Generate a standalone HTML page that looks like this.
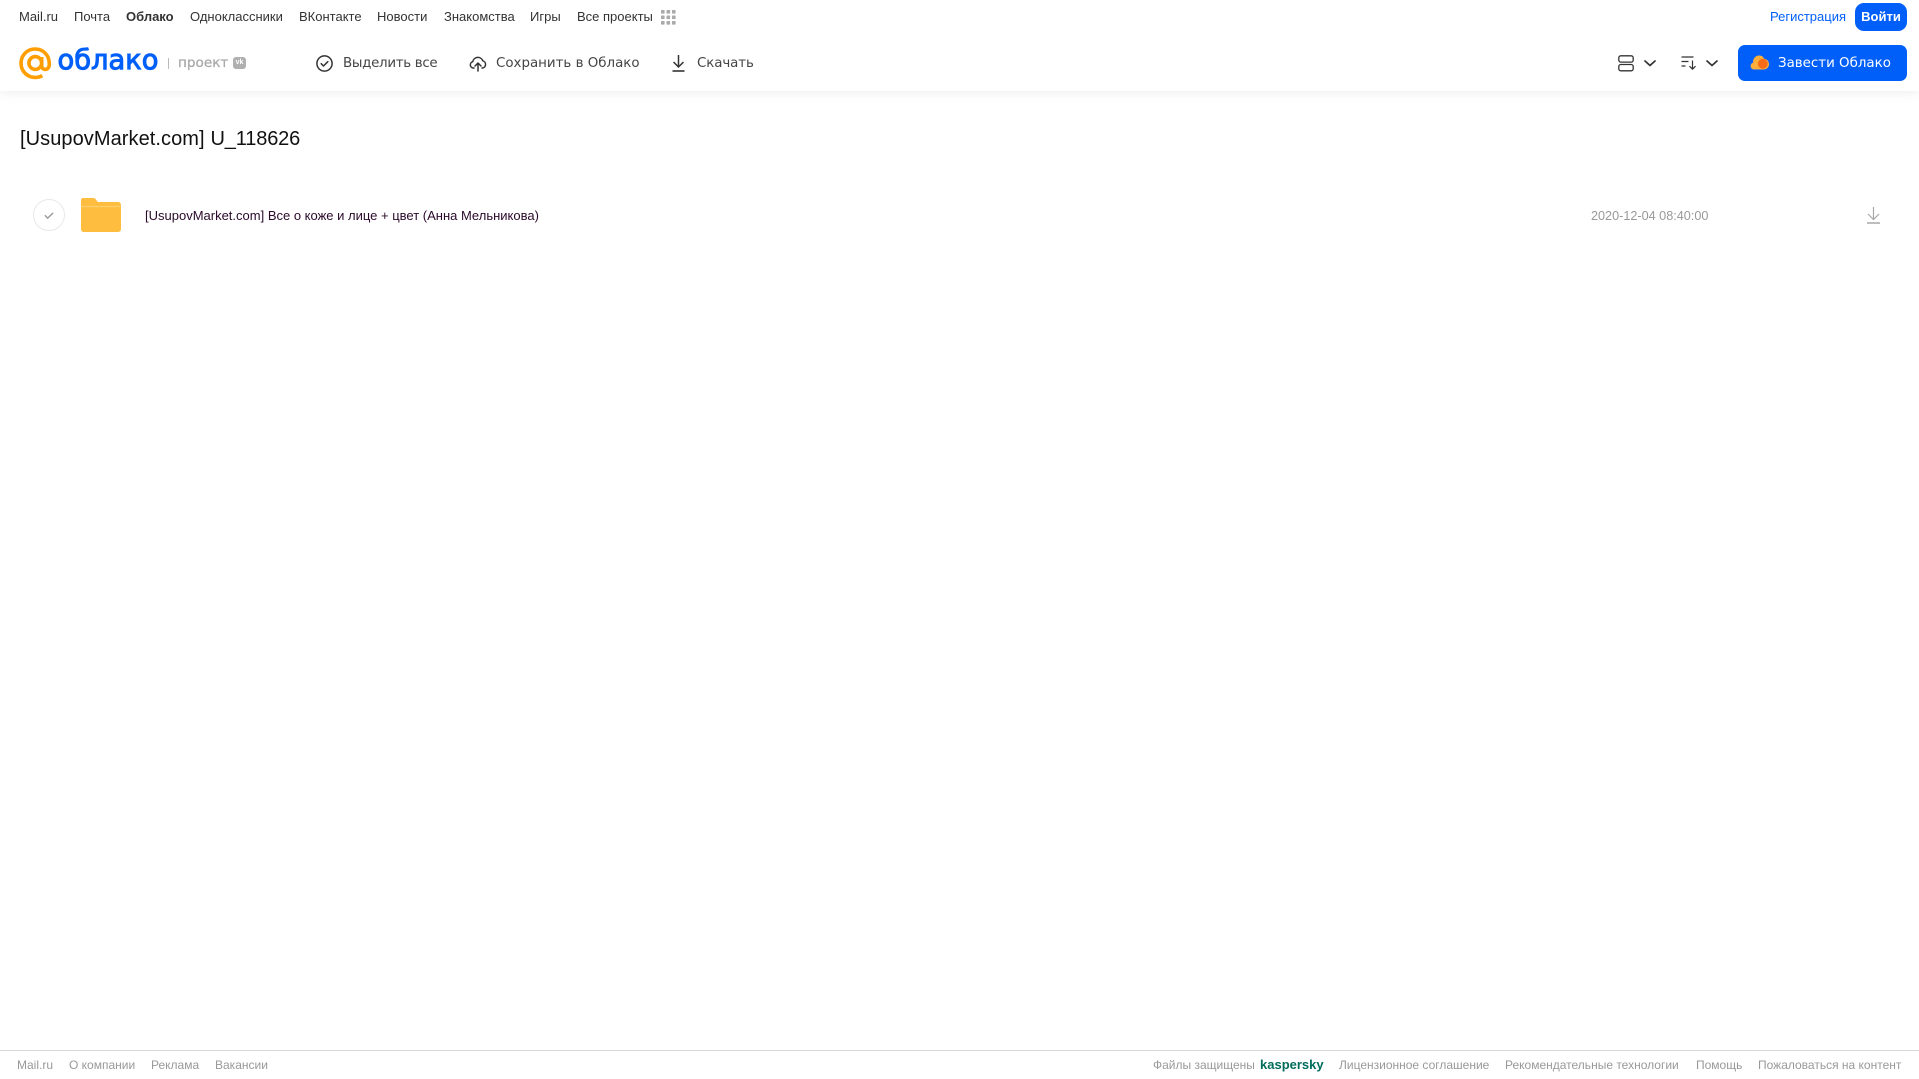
<!DOCTYPE html>
<html lang="ru"><head><meta charset="utf-8"><title>Облако</title>
<style>
html,body{margin:0;padding:0;background:#fff;width:1919px;height:1079px;overflow:hidden;font-family:"Liberation Sans",sans-serif}
.t{position:absolute;white-space:nowrap;line-height:20px}
.n{top:7px;font-size:13px;color:#333}
.b{top:53.500px;color:#444;font-family:"DejaVu Sans","Liberation Sans",sans-serif;font-size:13.400px}
.f{top:1055px;font-size:12px;color:#999}
svg{position:absolute;overflow:visible}
#hd{position:absolute;left:0;top:0;width:1919px;height:91px;background:#fff;box-shadow:0 0 12px rgba(0,0,0,.09)}
</style></head><body>
<div id="hd"></div>
<span class="t n" style="left:19px">Mail.ru</span>
<span class="t n" style="left:74px">Почта</span>
<span class="t n" style="left:126px;font-weight:bold">Облако</span>
<span class="t n" style="left:190px">Одноклассники</span>
<span class="t n" style="left:299px">ВКонтакте</span>
<span class="t n" style="left:377px">Новости</span>
<span class="t n" style="left:444px">Знакомства</span>
<span class="t n" style="left:530px">Игры</span>
<span class="t n" style="left:577px">Все проекты</span>
<svg style="left:661px;top:10px" width="15" height="15" fill="#aaa"><rect x="0" y="0" width="3.600" height="3.600" rx=".6"/><rect x="5.500" y="0" width="3.600" height="3.600" rx=".6"/><rect x="11" y="0" width="3.600" height="3.600" rx=".6"/><rect x="0" y="5.500" width="3.600" height="3.600" rx=".6"/><rect x="5.500" y="5.500" width="3.600" height="3.600" rx=".6"/><rect x="11" y="5.500" width="3.600" height="3.600" rx=".6"/><rect x="0" y="11" width="3.600" height="3.600" rx=".6"/><rect x="5.500" y="11" width="3.600" height="3.600" rx=".6"/><rect x="11" y="11" width="3.600" height="3.600" rx=".6"/></svg>
<span class="t" style="left:1770px;top:7px;font-size:13px;color:#005ff9">Регистрация</span>
<div style="position:absolute;left:1855px;top:3px;width:52px;height:28px;background:#005ff9;border-radius:9px"></div>
<span class="t" style="left:1855px;width:52px;text-align:center;top:7px;font-size:13px;color:#fff;font-weight:bold">Войти</span>

<svg style="left:19px;top:47px" width="33" height="33" viewBox="0 0 33 33" fill="none" stroke="#ff9e00" stroke-width="3.600"><circle cx="16.300" cy="16" r="6.400"/><path d="M22.700 10v8.500c0 5.500 7.600 5.500 7.600-1.500C30.300 8 24 2 16 2 8.300 2 2 8.300 2 16.300 2 24.500 8.500 30.500 16.300 30.500c2.700 0 5-.7 7-1.900"/></svg>
<span class="t" style="left:57.500px;top:43px;line-height:36px;font-size:27.300px;color:#005ff9;font-family:'DejaVu Sans','Liberation Sans',sans-serif;-webkit-text-stroke:1px #005ff9">облако</span>
<div style="position:absolute;left:168px;top:58px;width:1px;height:11px;background:#bbb"></div>
<span class="t" style="left:178px;top:53px;font-size:13.600px;color:#aaa;font-family:'DejaVu Sans','Liberation Sans',sans-serif;-webkit-text-stroke:.3px #aaa">проект</span>
<div style="position:absolute;left:233px;top:57px;width:13px;height:12px;background:#b0b0b0;border-radius:3px"></div>
<span class="t" style="left:233px;top:57px;width:13px;height:12px;text-align:center;line-height:12px;font-size:7px;font-weight:bold;color:#fff">vk</span>

<svg style="left:316px;top:55px" width="17" height="17" viewBox="0 0 17 17" fill="none" stroke="#333" stroke-width="1.500"><circle cx="8.500" cy="8.500" r="7.600"/><path d="M5.200 8.700l2.300 2.300 4.300-4.300" stroke-linecap="round" stroke-linejoin="round"/></svg>
<span class="t b" style="left:343px;letter-spacing:-.3px">Выделить все</span>
<svg style="left:469px;top:54px" width="18" height="18" viewBox="0 0 18 18" fill="none" stroke="#333" stroke-width="1.500" stroke-linecap="round" stroke-linejoin="round"><path d="M5 14H4.200A3.200 3.200 0 0 1 3.800 7.700 5.200 5.200 0 0 1 13.800 6.800 3.700 3.700 0 0 1 13.600 14H13"/><path d="M9 17V9.500M6 12l3-3 3 3"/></svg>
<span class="t b" style="left:496px">Сохранить в Облако</span>
<svg style="left:671px;top:55px" width="15" height="17" viewBox="0 0 15 17" fill="none" stroke="#333" stroke-width="1.500"><path d="M7.500 0v11.500M2.500 7l5 5 5-5"/><path d="M1.500 16h12" stroke-width="1.600"/></svg>
<span class="t b" style="left:697px;letter-spacing:-.1px">Скачать</span>

<svg style="left:1618px;top:55px" width="16" height="17" viewBox="0 0 16 17" fill="none" stroke="#333" stroke-width="1.300"><rect x=".8" y=".8" width="14.400" height="6.300" rx="2"/><rect x=".8" y="9.500" width="14.400" height="6.300" rx="2"/></svg>
<svg style="left:1644px;top:60px" width="12" height="7" viewBox="0 0 12 7" fill="none" stroke="#333" stroke-width="1.700" stroke-linecap="round" stroke-linejoin="round"><path d="M1 1l5 4.500L11 1"/></svg>
<svg style="left:1681px;top:56px" width="16" height="14" viewBox="0 0 16 14" fill="none" stroke="#333" stroke-width="1.200"><path d="M.5 1h12M.5 5.500h7M.5 10h4"/><path d="M11.500 4.500V13M8.500 10.200l3 3 3-3" stroke-linejoin="round"/></svg>
<svg style="left:1706px;top:60px" width="12" height="7" viewBox="0 0 12 7" fill="none" stroke="#333" stroke-width="1.700" stroke-linecap="round" stroke-linejoin="round"><path d="M1 1l5 4.500L11 1"/></svg>

<div style="position:absolute;left:1738px;top:45px;width:169px;height:36px;background:#005ff9;border-radius:7px"></div>
<svg style="left:1750px;top:54px" width="20" height="17" viewBox="0 0 20 17"><path d="M4 15.500a3.500 3.500 0 0 1-.8-6.900A6 6 0 0 1 9 1.500a5 5 0 0 1 5 3.200 5.400 5.400 0 0 1 5 5.400 5.400 5.400 0 0 1-5.400 5.400z" fill="#ffae3b"/><circle cx="12.800" cy="9.800" r="4.900" fill="#f56b16"/></svg>
<span class="t b" style="left:1778px;color:#fff">Завести Облако</span>

<span class="t" style="left:20px;top:126.500px;line-height:24px;font-size:20px;color:#111;letter-spacing:.07px">[UsupovMarket.com]</span>
<span class="t" style="left:210.500px;top:126.500px;line-height:24px;font-size:20px;color:#111;letter-spacing:-.15px">U_118626</span>

<svg style="left:33px;top:199px" width="32" height="32" viewBox="0 0 32 32" fill="none"><circle cx="16" cy="16" r="15.500" stroke="#e8e8e8"/><path d="M11.800 16.300l2.900 2.800 5.400-5.200" stroke="#999" stroke-width="1.400"/></svg>
<svg style="left:81px;top:198px" width="40" height="34" viewBox="0 0 40 34"><path d="M2 0h10c1.500 0 2.300.5 3 1.500l1.700 2.500H37c1.600 0 3 1.300 3 3V31c0 1.700-1.300 3-3 3H3c-1.700 0-3-1.300-3-3V2C0 .9.900 0 2 0z" fill="#ffbd3f"/><path d="M0 8.500h40" stroke="#ffd06e" stroke-width="1.200"/></svg>
<span class="t" style="left:145px;top:205.500px;font-size:13px;color:#2a0a2a">[UsupovMarket.com] Все о коже и лице + цвет (Анна Мельникова)</span>
<span class="t" style="left:1591px;top:205.500px;font-size:12.650px;color:#999">2020-12-04 08:40:00</span>
<svg style="left:1866px;top:206px" width="15" height="18" viewBox="0 0 15 18" fill="none" stroke="#a8a8a8" stroke-width="1.200"><path d="M7.500 1v12M2 8l5.500 5.500L13 8"/><path d="M1 17h13" stroke-width="1.500"/></svg>

<div style="position:absolute;left:0;top:1050px;width:1919px;height:1px;background:#d9d9d9"></div>
<span class="t f" style="left:17px">Mail.ru</span>
<span class="t f" style="left:69px">О компании</span>
<span class="t f" style="left:151px">Реклама</span>
<span class="t f" style="left:215px">Вакансии</span>
<span class="t f" style="left:1153px">Файлы защищены</span>
<span class="t f" style="left:1260px;font-weight:bold;color:#006d5c;font-size:13px">kaspersky</span>
<span class="t f" style="left:1339px">Лицензионное соглашение</span>
<span class="t f" style="left:1505px">Рекомендательные технологии</span>
<span class="t f" style="left:1696px">Помощь</span>
<span class="t f" style="left:1758px">Пожаловаться на контент</span>
</body></html>
